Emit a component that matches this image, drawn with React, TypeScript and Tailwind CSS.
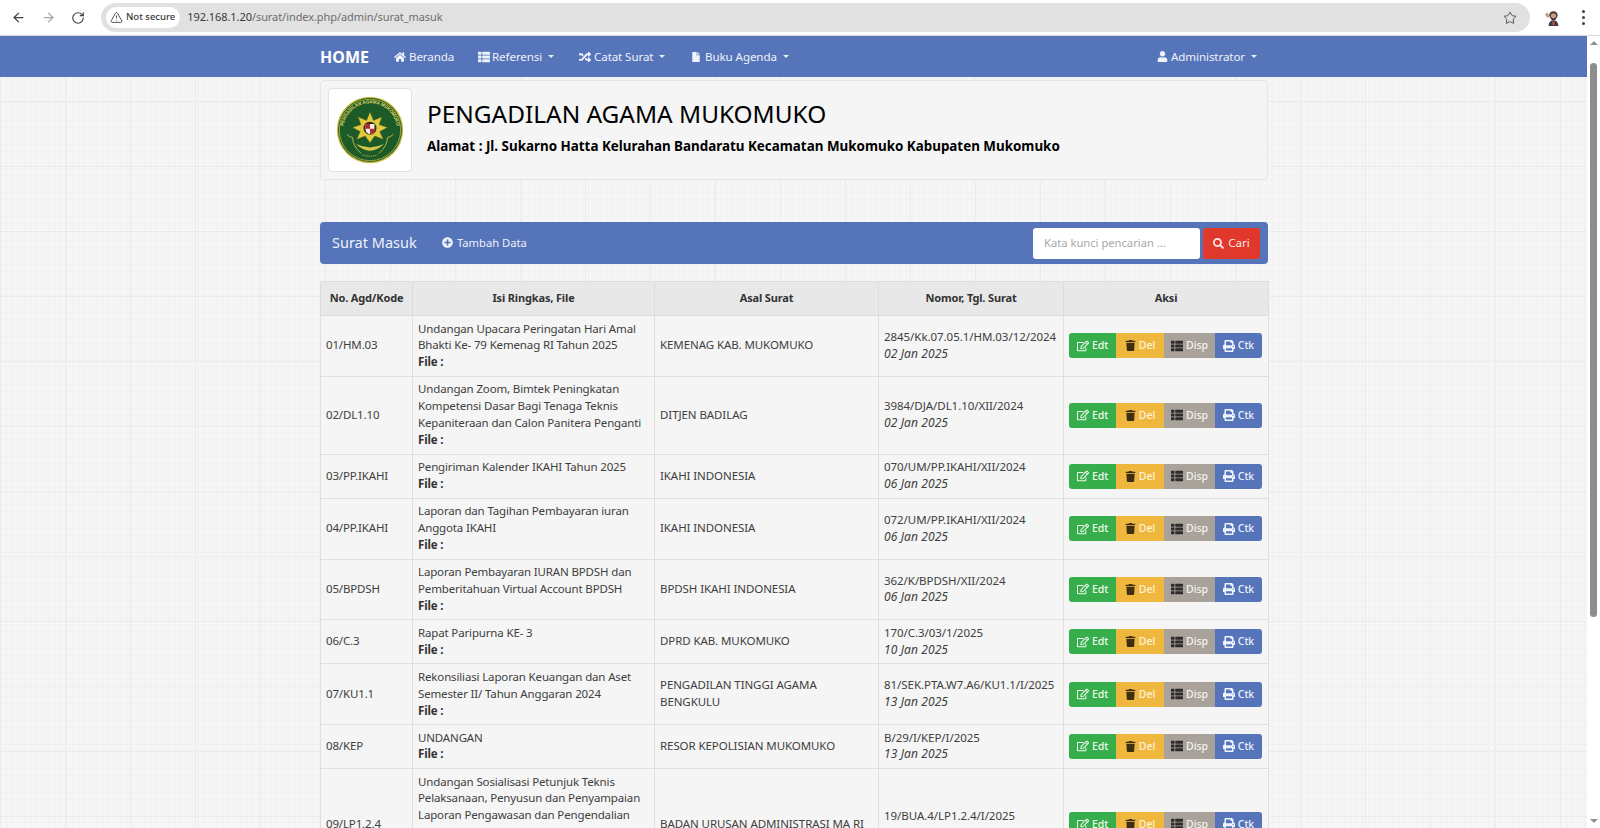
import React from "react";
import { ArrowLeft, ArrowRight, RotateCw, TriangleAlert, Star } from "lucide-react";
import { FaHome, FaThList, FaRandom, FaFile, FaUser, FaPlusCircle, FaSearch, FaRegEdit, FaTrash, FaPrint } from "react-icons/fa";

type Row = { no: string; isi: string[]; file?: boolean; asal: string[]; nomor: string; tgl: string; h?: string };

const rows: Row[] = [
  { no: "01/HM.03", isi: ["Undangan Upacara Peringatan Hari Amal", "Bhakti Ke- 79 Kemenag RI Tahun 2025"], file: true, asal: ["KEMENAG KAB. MUKOMUKO"], nomor: "2845/Kk.07.05.1/HM.03/12/2024", tgl: "02 Jan 2025" },
  { no: "02/DL1.10", isi: ["Undangan Zoom, Bimtek Peningkatan", "Kompetensi Dasar Bagi Tenaga Teknis", "Kepaniteraan dan Calon Panitera Penganti"], file: true, asal: ["DITJEN BADILAG"], nomor: "3984/DJA/DL1.10/XII/2024", tgl: "02 Jan 2025", h: "h-[78px]" },
  { no: "03/PP.IKAHI", isi: ["Pengiriman Kalender IKAHI Tahun 2025"], file: true, asal: ["IKAHI INDONESIA"], nomor: "070/UM/PP.IKAHI/XII/2024", tgl: "06 Jan 2025" },
  { no: "04/PP.IKAHI", isi: ["Laporan dan Tagihan Pembayaran iuran", "Anggota IKAHI"], file: true, asal: ["IKAHI INDONESIA"], nomor: "072/UM/PP.IKAHI/XII/2024", tgl: "06 Jan 2025" },
  { no: "05/BPDSH", isi: ["Laporan Pembayaran IURAN BPDSH dan", "Pemberitahuan Virtual Account BPDSH"], file: true, asal: ["BPDSH IKAHI INDONESIA"], nomor: "362/K/BPDSH/XII/2024", tgl: "06 Jan 2025" },
  { no: "06/C.3", isi: ["Rapat Paripurna KE- 3"], file: true, asal: ["DPRD KAB. MUKOMUKO"], nomor: "170/C.3/03/1/2025", tgl: "10 Jan 2025" },
  { no: "07/KU1.1", isi: ["Rekonsiliasi Laporan Keuangan dan Aset", "Semester II/ Tahun Anggaran 2024"], file: true, asal: ["PENGADILAN TINGGI AGAMA", "BENGKULU"], nomor: "81/SEK.PTA.W7.A6/KU1.1/I/2025", tgl: "13 Jan 2025" },
  { no: "08/KEP", isi: ["UNDANGAN"], file: true, asal: ["RESOR KEPOLISIAN MUKOMUKO"], nomor: "B/29/I/KEP/I/2025", tgl: "13 Jan 2025" },
  { no: "09/LP1.2.4", isi: ["Undangan Sosialisasi Petunjuk Teknis", "Pelaksanaan, Penyusun dan Penyampaian", "Laporan Pengawasan dan Pengendalian"], asal: ["BADAN URUSAN ADMINISTRASI MA RI"], nomor: "19/BUA.4/LP1.2.4/I/2025", tgl: "", h: "h-[112px]" },
];

function Logo() {
  return (
    <svg viewBox="0 0 82 82" className="w-[68px] h-[68px]">
      <circle cx="41" cy="41" r="40" fill="#c9b93a" />
      <circle cx="41" cy="41" r="38.5" fill="#1c5a28" />
      <circle cx="41" cy="41" r="37" fill="none" stroke="#d8c94a" strokeWidth="0.8" />
      <defs>
        <path id="arcLogo" d="M9 47 A32.5 32.5 0 1 1 73 47" />
      </defs>
      <text fontSize="5.4" fill="#e3d869" fontFamily="'Liberation Sans', sans-serif" fontWeight="700">
        <textPath href="#arcLogo" startOffset="50%" textAnchor="middle">PENGADILAN AGAMA MUKOMUKO</textPath>
      </text>
      <g transform="translate(41 38) scale(0.82) translate(-41 -38)">
        <path d="M41 16 L46 28 L58 23 L54 34 L66 38 L55 44 L60 55 L48 50 L41 60 L34 50 L22 55 L27 44 L16 38 L28 34 L24 23 L36 28 Z" fill="#e2c93d" stroke="#b59a22" strokeWidth="0.5" />
        <circle cx="41" cy="39" r="9.5" fill="#3d2a1a" />
        <path d="M34.5 33 H47.5 V41 Q47.5 46 41 48 Q34.5 46 34.5 41 Z" fill="#f4f1e6" />
        <path d="M34.5 33 H41 V40 H34.5 Z M41 40 H47.5 V43 Q46 46.5 41 48 Z" fill="#b3282c" />
      </g>
      <path d="M24 58 Q41 74 58 58 Q41 66 24 58 Z" fill="#d8c94a" />
      <path d="M13 46 Q16 50 20 50 Q20 60 30 69 M69 46 Q66 50 62 50 Q62 60 52 69" fill="none" stroke="#d8c94a" strokeWidth="1" />
      <path d="M32 71 Q41 74 50 71" fill="none" stroke="#d8c94a" strokeWidth="1" strokeDasharray="1.5 1" />
    </svg>
  );
}

function Avatar() {
  return (
    <svg viewBox="0 0 20 20" className="w-[18px] h-[18px]">
      <path d="M1 6 L4 4 L6 8 L4 10 Z" fill="#c99a72" />
      <circle cx="10.5" cy="7" r="4.6" fill="#4a3a34" />
      <circle cx="10.5" cy="7.8" r="3" fill="#c49a80" />
      <path d="M7.5 9 Q10.5 13 13.5 9 L13 11.5 Q10.5 13.5 8 11.5 Z" fill="#2c2422" />
      <path d="M5 19 Q5.5 12.5 10.5 12.5 Q15.5 12.5 16 19 Z" fill="#3f3a44" />
      <path d="M9 14 L12 14 L11.5 18 L9.5 18 Z" fill="#b9534a" />
    </svg>
  );
}

function Actions() {
  const cls = "flex items-center justify-center gap-[3px] h-[25px] text-[10.5px] font-medium tracking-[-0.05px]";
  return (
    <div className="flex w-[193px]">
      <div className={cls + " w-[47px] bg-[#35ae4b] text-[#f1f8ee] rounded-l-[3px]"}>
        <FaRegEdit className="text-[12px]" />Edt
      </div>
      <div className={cls + " w-[48px] bg-[#efb73e] text-[#fdf3d8]"}>
        <FaTrash className="text-[11px] text-[#3e2f10]" />Del
      </div>
      <div className={cls + " w-[51px] bg-[#a9a29a] text-[#f4f2ef]"}>
        <FaThList className="text-[12px] text-[#2d2d2d]" />Disp
      </div>
      <div className={cls + " w-[47px] bg-[#5674b9] text-[#eef2fa] rounded-r-[3px]"}>
        <FaPrint className="text-[12px]" />Ctk
      </div>
    </div>
  );
}

function Caret() {
  return <span className="ml-[6px] inline-block w-0 h-0 border-x-[3.5px] border-x-transparent border-t-[3.5px] border-t-[#e9eef8]" />;
}

function NavItem({ icon, label, caret, cls }: { icon: React.ReactNode; label: string; caret?: boolean; cls?: string }) {
  return (
    <div className={"flex items-center text-[11.6px] tracking-[-0.1px] pt-[1px] text-[#eef2fa] " + (cls ?? "")}>
      {icon}
      <span>{label}</span>
      {caret && <Caret />}
    </div>
  );
}

export default function App() {
  return (
    <div className="h-screen w-full overflow-hidden flex flex-col bg-white font-['Noto_Sans',sans-serif] text-[#404040]">
      {/* browser toolbar */}
      <div className="h-[36px] shrink-0 flex items-center border-b border-[#d5d9e0] bg-white">
        <div className="flex items-center w-[101px] pl-[11px] gap-[15px]">
          <ArrowLeft className="w-[15px] h-[15px] text-[#404040]" strokeWidth={2} />
          <ArrowRight className="w-[15px] h-[15px] text-[#a8a8a8]" strokeWidth={2} />
          <RotateCw className="w-[14px] h-[14px] text-[#404040]" strokeWidth={2} />
        </div>
        <div className="w-[1429px] h-[29px] rounded-full bg-[#e1e1e1] flex items-center pl-[5px] pr-[13px]">
          <div className="h-[21px] rounded-full bg-white flex items-center gap-[3px] pl-[4px] pr-[5px] text-[9.5px] font-medium text-[#3a3a3a]">
            <TriangleAlert className="w-[13px] h-[13px]" strokeWidth={1.6} />
            Not secure
          </div>
          <div className="ml-[7px] text-[11px] tracking-[-0.07px] text-[#6d6d6d]">
            <span className="text-[#3a3a3a]">192.168.1.20</span>/surat/index.php/admin/surat_masuk
          </div>
          <Star className="ml-auto w-[14px] h-[14px] text-[#4a4a4a]" strokeWidth={1.6} />
        </div>
        <div className="ml-[14px]"><Avatar /></div>
        <div className="ml-[20px] flex flex-col gap-[3px]">
          <span className="w-[3px] h-[3px] rounded-full bg-[#404040]" />
          <span className="w-[3px] h-[3px] rounded-full bg-[#404040]" />
          <span className="w-[3px] h-[3px] rounded-full bg-[#404040]" />
        </div>
      </div>

      <div className="flex-1 min-h-0 flex">
        {/* page */}
        <div className="flex-1 min-w-0 overflow-hidden bg-[#f6f6f6] bg-[image:linear-gradient(to_right,#ebebeb_1px,transparent_1px),linear-gradient(to_bottom,#ebebeb_1px,transparent_1px),linear-gradient(to_right,#f1f1f1_1px,transparent_1px),linear-gradient(to_bottom,#f1f1f1_1px,transparent_1px)] bg-[size:65px_65px,65px_65px,6px_6px,6px_6px]">
          <nav className="h-[41px] bg-[#5674b9]">
            <div className="w-[948px] ml-[320px] h-full flex items-center">
              <div className="text-[16px] font-bold text-white w-[74px]">HOME</div>
              <NavItem cls="w-[84px]" icon={<FaHome className="text-[12px] mr-[3px]" />} label="Beranda" />
              <NavItem cls="w-[101px]" icon={<FaThList className="text-[12px] mr-[2px]" />} label="Referensi" caret />
              <NavItem cls="w-[112px]" icon={<FaRandom className="text-[12px] mr-[3px]" />} label="Catat Surat" caret />
              <NavItem icon={<FaFile className="text-[10px] mr-[4px]" />} label="Buku Agenda" caret />
              <NavItem cls="ml-auto mr-[11px]" icon={<FaUser className="text-[11px] mr-[3px]" />} label="Administrator" caret />
            </div>
          </nav>

          <div className="w-[948px] ml-[320px]">
            <div className="mt-[3px] h-[100px] rounded-[4px] border border-[#e6e6e6] bg-[#f5f5f5] pl-[7px] pt-[7px] flex">
              <div className="w-[84px] h-[84px] rounded-[4px] border border-[#e2e2e2] bg-white flex items-center justify-center">
                <Logo />
              </div>
              <div className="ml-[15px] pt-[9px] text-black">
                <div className="text-[24.4px] leading-[34px]">PENGADILAN AGAMA MUKOMUKO</div>
                <div className="mt-[5px] text-[13.4px] leading-[20px] font-bold">Alamat : Jl. Sukarno Hatta Kelurahan Bandaratu Kecamatan Mukomuko Kabupaten Mukomuko</div>
              </div>
            </div>

            <div className="mt-[42px] h-[42px] rounded-[4px] bg-[#5674b9] flex items-center pl-[12px] pr-[8px]">
              <div className="text-[14.5px] text-[#eef2fa] w-[110px]">Surat Masuk</div>
              <div className="flex items-center gap-[4px] text-[11.2px] text-[#eef2fa]">
                <FaPlusCircle className="text-[11px]" />Tambah Data
              </div>
              <div className="ml-auto w-[167px] h-[31px] rounded-[3px] bg-white flex items-center pl-[11px] text-[11.2px] text-[#a9a9a9]">Kata kunci pencarian ...</div>
              <div className="ml-[3px] w-[57px] h-[31px] rounded-[3px] bg-[#e0392c] flex items-center justify-center gap-[4px] text-[11.5px] text-[#fbe9e6]">
                <FaSearch className="text-[11px]" />Cari
              </div>
            </div>

            <table className="mt-[17px] w-[948px] table-fixed border-collapse text-[11.5px] tracking-[-0.15px] leading-[16.8px]">
              <colgroup>
                <col className="w-[92px]" />
                <col className="w-[242px]" />
                <col className="w-[224px]" />
                <col className="w-[185px]" />
                <col className="w-[205px]" />
              </colgroup>
              <thead>
                <tr className="h-[34px] bg-[#e8e8e8] text-[#333]">
                  {["No. Agd/Kode", "Isi Ringkas, File", "Asal Surat", "Nomor, Tgl. Surat", "Aksi"].map((t) => (
                    <th key={t} className="border border-[#dcdcdc] text-[11px] font-bold text-center align-middle px-0">{t}</th>
                  ))}
                </tr>
              </thead>
              <tbody className="bg-[#f5f5f5]">
                {rows.map((r) => (
                  <tr key={r.no} className={r.h ?? ""}>
                    <td className="border border-[#dfdfdf] px-[5px] py-[4.7px] align-middle whitespace-nowrap">{r.no}</td>
                    <td className="border border-[#dfdfdf] px-[5px] py-[4.7px] align-top whitespace-nowrap">
                      {r.isi.map((l) => <div key={l}>{l}</div>)}
                      {r.file && <div className="font-bold text-[#333]">File :</div>}
                    </td>
                    <td className="border border-[#dfdfdf] px-[5px] py-[4.7px] align-middle whitespace-nowrap tracking-[-0.08px]">
                      {r.asal.map((l) => <div key={l}>{l}</div>)}
                    </td>
                    <td className="border border-[#dfdfdf] px-[5px] py-[4.7px] align-middle whitespace-nowrap tracking-[-0.05px]">
                      <div>{r.nomor}</div>
                      <div className="italic h-[16.8px] text-[12px] tracking-[0.1px]">{r.tgl}</div>
                    </td>
                    <td className="border border-[#dfdfdf] px-[5px] py-[4.7px] align-middle">
                      <Actions />
                    </td>
                  </tr>
                ))}
              </tbody>
            </table>
          </div>
        </div>

        {/* scrollbar */}
        <div className="w-[13px] shrink-0 bg-white flex flex-col items-center pt-[5px]">
          <span className="w-0 h-0 border-x-[4px] border-x-transparent border-b-[4px] border-b-[#8f8f8f]" />
          <div className="mt-[18px] w-[7px] h-[554px] rounded-[4px] bg-[#8d8d8d]" />
          <span className="mt-auto mb-[5px] w-0 h-0 border-x-[4px] border-x-transparent border-t-[4px] border-t-[#8f8f8f]" />
        </div>
      </div>
    </div>
  );
}
